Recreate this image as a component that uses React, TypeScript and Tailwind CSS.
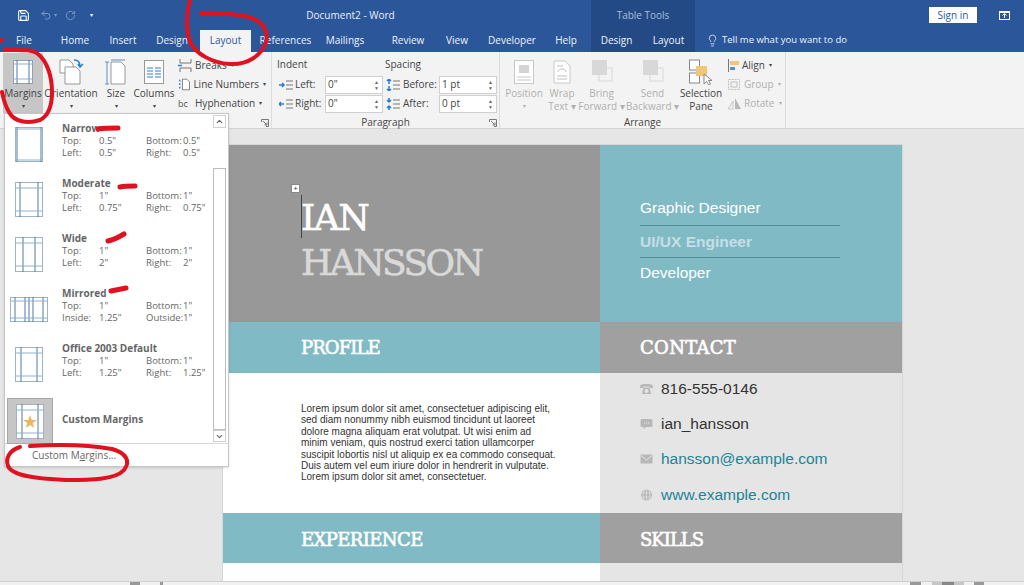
import { Lightbulb, Save, Undo2, RotateCw, ChevronUp, ChevronDown } from 'lucide-react';

const ui = 'font-["Open_Sans","Noto_Sans",sans-serif]';
const slab = 'font-["DejaVu_Serif",serif] [-webkit-text-stroke:0.6px_currentColor]';

const tabs = [
    { label: 'File', w: 'w-[48px]' },
    { label: 'Home', w: 'w-[54px]' },
    { label: 'Insert', w: 'w-[42px]' },
    { label: 'Design', w: 'w-[56px]' },
];
const tabsAfter = [
    { label: 'References', w: 'w-[69px]' },
    { label: 'Mailings', w: 'w-[50px]' },
    { label: 'Review', w: 'w-[76px]' },
    { label: 'View', w: 'w-[22px]' },
    { label: 'Developer', w: 'w-[88px]' },
    { label: 'Help', w: 'w-[20px]' },
];

const margins = [
    { name: 'Narrow', a: ['Top:', '0.5"', 'Bottom:', '0.5"'], b: ['Left:', '0.5"', 'Right:', '0.5"'], x: 2, y: 2 },
    { name: 'Moderate', a: ['Top:', '1"', 'Bottom:', '1"'], b: ['Left:', '0.75"', 'Right:', '0.75"'], x: 5, y: 6 },
    { name: 'Wide', a: ['Top:', '1"', 'Bottom:', '1"'], b: ['Left:', '2"', 'Right:', '2"'], x: 8, y: 6 },
    { name: 'Mirrored', a: ['Top:', '1"', 'Bottom:', '1"'], b: ['Inside:', '1.25"', 'Outside:', '1"'], x: 6, y: 6, wide: true },
    { name: 'Office 2003 Default', a: ['Top:', '1"', 'Bottom:', '1"'], b: ['Left:', '1.25"', 'Right:', '1.25"'], x: 6, y: 6 },
];

const Thumb = ({ x, y, wide }: { x: number; y: number; wide?: boolean }) =>
    wide ? (
        <svg width="38" height="25" viewBox="0 0 38 25" className="shrink-0">
            <rect x="0.5" y="0.5" width="37" height="24" fill="#fff" stroke="#9fb3c8" />
            <path d="M19 0V25M5 0V25M33 0V25M15 0V25M23 0V25" stroke="#4f7ba3" fill="none" />
            <path d="M0 4H38M0 21H38" stroke="#8fb0cc" fill="none" />
        </svg>
    ) : (
        <svg width="28" height="35" viewBox="0 0 28 35" className="shrink-0">
            <rect x="0.5" y="0.5" width="27" height="34" fill="#fff" stroke="#9fb3c8" />
            <path d={`M${x} 0V35M${28 - x} 0V35`} stroke="#4f7ba3" fill="none" />
            <path d={`M0 ${y}H28M0 ${35 - y}H28`} stroke="#8fb0cc" fill="none" />
        </svg>
    );

const BigButton = ({ w, label, label2, active, disabled, arrow, icon }: { w: string; label: string; label2?: string; active?: boolean; disabled?: boolean; arrow?: boolean; icon: React.ReactNode }) => (
    <div className={`${w} h-[60px] shrink-0 flex flex-col items-center pt-[3px] text-[10px] leading-[13px] ${active ? 'bg-[#c6c6c6]' : ''} ${disabled ? 'text-[#b0b0b0]' : 'text-[#444]'}`}>
        <div className="h-[31px] flex items-center justify-center">{icon}</div>
        <div className="whitespace-nowrap">{label}</div>
        {label2 && <div className="whitespace-nowrap">{label2}</div>}
        {arrow && <div className="text-[6px] leading-[13px]">▾</div>}
    </div>
);

const SmallRow = ({ icon, label, disabled }: { icon: React.ReactNode; label: string; disabled?: boolean }) => (
    <div className={`h-[19px] flex items-center gap-[3px] text-[10px] whitespace-nowrap ${disabled ? 'text-[#b0b0b0]' : 'text-[#444]'}`}>
        {icon}
        {label}
        <span className="text-[6px] ml-[1px]">▾</span>
    </div>
);

const SpinInput = ({ value, w }: { value: string; w: string }) => (
    <div className={`${w} h-[18px] bg-white border border-[#d0d0d0] flex items-center justify-between pl-[2px] pr-[3px] text-[10px] text-[#444]`}>
        {value}
        <span className="flex flex-col text-[5px] leading-[6px] text-[#666]">
            <span>▲</span>
            <span>▼</span>
        </span>
    </div>
);

const Lines = ({ arrow }: { arrow: string }) => (
    <svg width="14" height="12" viewBox="0 0 14 12" className="shrink-0">
        <path d="M7 2H14M7 6H14M7 10H14" stroke="#777" fill="none" />
        <path d={arrow} stroke="#2b7cd3" strokeWidth="1.5" fill="none" />
    </svg>
);

const Launcher = () => (
    <svg width="8" height="8" viewBox="0 0 8 8">
        <path d="M0.5 3V0.5H7.5V7.5H5M2 2L6 6M6 3.5V6H3.5" stroke="#777" fill="none" />
    </svg>
);

const Arrange = ({ color }: { color: string }) => (
    <svg width="32" height="26" viewBox="0 0 32 26">
        <rect x="13" y="9" width="13" height="13" fill="#f3f3f3" stroke={color} />
        <rect x="6" y="1" width="15" height="15" fill={color} />
    </svg>
);

const ContactIcon = ({ kind }: { kind: 'phone' | 'chat' | 'mail' | 'web' }) => (
    <svg width="13" height="12" viewBox="0 0 13 12" className="shrink-0">
        {kind === 'phone' && <path d="M0 4C0 1 3 1 6.500 1C10 1 13 1 13 4V5H9.500V3.500H3.500V5H0ZM3 6L4 4.500H9L10 6L11 11H2ZM6.500 6A2 2 0 1 0 6.500 10A2 2 0 1 0 6.500 6Z" fill="#b8b8b8" fillRule="evenodd" />}
        {kind === 'chat' && (
            <>
                <path d="M2 1H11Q12.500 1 12.500 2.500V7.500Q12.500 9 11 9H6L3.500 11V9H2Q0.500 9 0.500 7.500V2.500Q0.500 1 2 1Z" fill="#b8b8b8" />
                <path d="M4 5H5M6 5H7M8 5H9" stroke="#e5e5e5" />
            </>
        )}
        {kind === 'mail' && (
            <>
                <rect x="0.500" y="1.500" width="12" height="9" fill="#b8b8b8" />
                <path d="M1 2.500L6.500 7L12 2.500" stroke="#e5e5e5" fill="none" />
            </>
        )}
        {kind === 'web' && (
            <>
                <circle cx="6.500" cy="6" r="5.500" fill="#b8b8b8" />
                <path d="M1 4H12M1 8H12M6.500 0.500V11.500M4 1Q2 6 4 11M9 1Q11 6 9 11" stroke="#e5e5e5" strokeWidth="0.6" fill="none" />
            </>
        )}
    </svg>
);

const App = () => {
    return (
        <div className={`relative w-[1024px] h-[585px] overflow-hidden flex flex-col bg-[#e6e6e6] ${ui}`}>
            {/* title bar */}
            <div className="h-[30px] shrink-0 bg-[#2b579a] flex items-center text-white text-[10px]">
                <Save size={13} className="ml-[17px]" />
                <Undo2 size={12} className="ml-[10px] text-[#7d9ac7]" />
                <span className="ml-[2px] text-[6px] text-[#7d9ac7]">▾</span>
                <RotateCw size={11} className="ml-[8px] text-[#7d9ac7]" />
                <span className="ml-[14px] text-[6px]">▾</span>
                <div className="ml-[212px] w-[91px] text-center whitespace-nowrap text-[#e8eef7]">Document2 - Word</div>
                <div className="ml-[195px] w-[104px] h-full bg-[#234a85] flex items-center justify-center text-[#a9bedd]">Table Tools</div>
                <div className="ml-[234px] w-[48px] h-[16px] bg-white text-[#2b579a] flex items-center justify-center">Sign in</div>
                <svg width="11" height="9" viewBox="0 0 11 9" className="ml-[22px]">
                    <rect x="0.5" y="0.5" width="10" height="8" fill="none" stroke="#fff" />
                    <path d="M5.5 7V3M3.5 4.5L5.5 2.5L7.5 4.5M0 1.5H11" stroke="#fff" fill="none" />
                </svg>
            </div>
            {/* tabs */}
            <div className="h-[22px] shrink-0 bg-[#2b579a] flex items-stretch text-[10px] text-[#eef3fa] whitespace-nowrap">
                {tabs.map((t) => (
                    <div key={t.label} className={`${t.w} pb-[2px] flex items-center justify-center`}>{t.label}</div>
                ))}
                <div className="w-[51px] pb-[2px] bg-[#f3f3f3] text-[#2b579a] flex items-center justify-center">Layout</div>
                {tabsAfter.map((t) => (
                    <div key={t.label} className={`${t.w} pb-[2px] flex items-center justify-center`}>{t.label}</div>
                ))}
                <div className="ml-[15px] w-[51px] pb-[2px] bg-[#234a85] flex items-center justify-center">Design</div>
                <div className="w-[53px] pb-[2px] bg-[#234a85] flex items-center justify-center">Layout</div>
                <div className="ml-[11px] pb-[2px] flex items-center gap-[3px] text-[9.5px]">
                    <Lightbulb size={13} strokeWidth={1.4} />
                    Tell me what you want to do
                </div>
            </div>
            {/* ribbon */}
            <div className="h-[77px] shrink-0 bg-[#f3f3f3] border-b border-[#d4d4d4] flex items-stretch">
                <div className="w-[272px] shrink-0 border-r border-[#dcdcdc] flex pl-[3px] pt-px relative">
                    <BigButton w="w-[40px]" label="Margins" active arrow icon={
                        <svg width="20" height="24" viewBox="0 0 20 24">
                            <rect x="0.5" y="0.5" width="19" height="23" fill="#fff" stroke="#8ba1b8" />
                            <path d="M4 0V24M16 0V24" stroke="#4f7ba3" fill="none" />
                            <path d="M0 4H20M0 19H20" stroke="#8fb0cc" fill="none" />
                        </svg>
                    } />
                    <div className="w-[2px]" />
                    <BigButton w="w-[52px]" label="Orientation" arrow icon={
                        <svg width="27" height="26" viewBox="0 0 27 26">
                            <path d="M2 1H11L15 5V14H2Z" fill="#fff" stroke="#999" />
                            <path d="M7 8H18L22 12V25H7Z" fill="#fff" stroke="#999" />
                            <path d="M16 1C20 1 22 3 22 7M20 5L22 8L25 5" stroke="#2b7cd3" strokeWidth="1.5" fill="none" />
                        </svg>
                    } />
                    <div className="w-[5px]" />
                    <BigButton w="w-[28px]" label="Size" arrow icon={
                        <svg width="22" height="26" viewBox="0 0 22 26">
                            <path d="M6 3H16L20 7V25H6Z" fill="#fff" stroke="#999" />
                            <path d="M2 3V25M6 1H20M0 3H4M0 25H4" stroke="#5a8fc4" fill="none" />
                        </svg>
                    } />
                    <div className="w-[3px]" />
                    <BigButton w="w-[42px]" label="Columns" arrow icon={
                        <svg width="20" height="24" viewBox="0 0 20 24">
                            <rect x="0.5" y="0.5" width="19" height="23" fill="#fff" stroke="#999" />
                            <path d="M3 8H9M11 8H17M3 11H9M11 11H17M3 14H9M11 14H17M3 17H9M11 17H17" stroke="#2b7cd3" fill="none" />
                        </svg>
                    } />
                    <div className="ml-[3px] w-[88px] pt-[3px]">
                        <SmallRow label="Breaks" icon={
                            <svg width="14" height="13" viewBox="0 0 14 13">
                                <path d="M2 0V4H13V0M2 13V9H13V13" stroke="#777" fill="none" />
                                <path d="M0 6.5H4" stroke="#2b7cd3" strokeWidth="1.5" />
                            </svg>
                        } />
                        <SmallRow label="Line Numbers" icon={
                            <svg width="14" height="13" viewBox="0 0 14 13">
                                <path d="M5 0.5H10L13 3.5V12.5H5Z" fill="#fff" stroke="#777" />
                                <path d="M2 1V3M2 5V7M2 9V11" stroke="#2b7cd3" strokeWidth="1.5" />
                            </svg>
                        } />
                        <SmallRow label="Hyphenation" icon={<span className="w-[14px] text-[9px] leading-[9px] text-[#555]">bc</span>} />
                    </div>
                    <div className="absolute right-[2px] bottom-[1px]"><Launcher /></div>
                </div>
                <div className="w-[228px] shrink-0 border-r border-[#dcdcdc] flex flex-col relative text-[10px] text-[#444]">
                    <div className="flex pl-[5px]">
                        <div className="w-[108px]">
                            <div className="h-[23px] pt-[6px] leading-[13px]">Indent</div>
                            <div className="h-[19px] pl-[2px] flex items-center"><Lines arrow="M0 6H5M3 4L5 6L3 8" /><span className="ml-[2px] w-[30px]">Left:</span><SpinInput value={'0"'} w="w-[58px]" /></div>
                            <div className="h-[19px] pl-[2px] flex items-center"><Lines arrow="M0 6H5M2 4L0 6L2 8" /><span className="ml-[2px] w-[30px]">Right:</span><SpinInput value={'0"'} w="w-[58px]" /></div>
                        </div>
                        <div className="ml-[1px]">
                            <div className="h-[23px] pt-[6px] -ml-px leading-[13px]">Spacing</div>
                            <div className="h-[19px] flex items-center"><Lines arrow="M3 0V5M1 2L3 0L5 2M3 7V12M1 10L3 12L5 10" /><span className="ml-[3px] w-[36px]">Before:</span><SpinInput value="1 pt" w="w-[58px]" /></div>
                            <div className="h-[19px] flex items-center"><Lines arrow="M3 0V4M1 2L3 4L5 2M3 8V12M1 10L3 8L5 10" /><span className="ml-[3px] w-[36px]">After:</span><SpinInput value="0 pt" w="w-[58px]" /></div>
                        </div>
                    </div>
                    <div className="absolute bottom-0 left-0 right-0 text-center leading-[11px]">Paragraph</div>
                    <div className="absolute right-[2px] bottom-[1px]"><Launcher /></div>
                </div>
                <div className="w-[286px] shrink-0 border-r border-[#dcdcdc] flex pl-[4px] pt-px relative">
                    <BigButton w="w-[40px]" label="Position" disabled arrow icon={
                        <svg width="20" height="24" viewBox="0 0 20 24">
                            <rect x="0.5" y="0.5" width="19" height="23" fill="#fff" stroke="#c8c8c8" />
                            <rect x="5" y="5" width="10" height="8" fill="#d4d4d4" />
                            <path d="M3 17H17M3 20H17" stroke="#c8c8c8" />
                        </svg>
                    } />
                    <div className="ml-[6px]">
                        <BigButton w="w-[24px]" label="Wrap" label2="Text ▾" disabled icon={
                            <svg width="18" height="24" viewBox="0 0 18 24">
                                <path d="M1 1H12L17 6V23H1Z" fill="#fff" stroke="#c8c8c8" />
                                <path d="M4 6H10M4 19H14M4 16H14M5 12C5 8 13 8 13 12" stroke="#c0c0c0" fill="none" />
                            </svg>
                        } />
                    </div>
                    <div className="ml-[7px]">
                        <BigButton w="w-[41px]" label="Bring" label2="Forward ▾" disabled icon={<Arrange color="#d8d8d8" />} />
                    </div>
                    <div className="ml-[6px]">
                        <BigButton w="w-[49px]" label="Send" label2="Backward ▾" disabled icon={<Arrange color="#d8d8d8" />} />
                    </div>
                    <div className="ml-[3px]">
                        <BigButton w="w-[42px]" label="Selection" label2="Pane" icon={
                            <svg width="24" height="26" viewBox="0 0 24 26">
                                <rect x="0.5" y="1" width="10" height="10" fill="#fff" stroke="#888" />
                                <rect x="0.5" y="14" width="10" height="10" fill="#fff" stroke="#888" />
                                <rect x="7" y="7" width="11" height="10" fill="#f0c778" />
                                <path d="M15 15V25L17.5 22.5L20 26L21.5 25L19.5 21.5H23Z" fill="#fff" stroke="#888" />
                            </svg>
                        } />
                    </div>
                    <div className="ml-[5px] pt-[3px]">
                        <SmallRow label="Align" icon={
                            <svg width="12" height="13" viewBox="0 0 12 13">
                                <path d="M1.5 0V13" stroke="#777" />
                                <rect x="3" y="2" width="9" height="4" fill="#f0c778" />
                                <rect x="3" y="8" width="5" height="3" fill="#5a8fc4" />
                            </svg>
                        } />
                        <SmallRow label="Group" disabled icon={
                            <svg width="14" height="13" viewBox="0 0 14 13">
                                <rect x="1.5" y="1.5" width="11" height="10" fill="none" stroke="#c0c0c0" strokeDasharray="2 1" />
                                <path d="M4 4H10V9H4Z" fill="none" stroke="#c0c0c0" />
                            </svg>
                        } />
                        <SmallRow label="Rotate" disabled icon={
                            <svg width="14" height="13" viewBox="0 0 14 13">
                                <path d="M1 12L6 4V12Z" fill="none" stroke="#c8c8c8" />
                                <path d="M8 12V1L14 12Z" fill="#b8b8b8" />
                            </svg>
                        } />
                    </div>
                    <div className="absolute bottom-0 left-0 right-0 text-center text-[10px] leading-[11px] text-[#444]">Arrange</div>
                </div>
            </div>
            {/* document */}
            <div className="flex-1 min-h-0 pl-[222px] pt-[15px]">
                <div className="w-[681px] border border-[#d6d6d6] border-b-0 h-full bg-white flex flex-col font-['Liberation_Sans',sans-serif]">
                    <div className="h-[177px] shrink-0 flex">
                        <div className="w-[377px] bg-[#989898] pl-[78px] pt-[50px] relative">
                            <div className="absolute left-[68px] top-[39px] w-[9px] h-[9px] bg-white border border-[#888] text-[#444] flex items-center justify-center text-[8px] leading-none">+</div>
                            <div className="absolute left-[78px] top-[50px] w-px h-[43px] bg-[#444]" />
                            <div className={`text-[36px] leading-[45px] tracking-[-1.5px] text-white ${slab}`}>IAN</div>
                            <div className={`text-[36px] leading-[45px] tracking-[-2.6px] text-[#d9d9d9] ${slab}`}>HANSSON</div>
                        </div>
                        <div className="flex-1 bg-[#80bac5] pl-[40px] pt-[54px] text-[15.5px] text-white">
                            <div className="w-[200px] h-[27px] border-b border-[#4f8f9c] leading-[18px]">Graphic Designer</div>
                            <div className="w-[200px] h-[32px] border-b border-[#4f8f9c] pt-[7px] leading-[18px] font-bold text-[#c5dfe5]">UI/UX Engineer</div>
                            <div className="pt-[6px] leading-[18px]">Developer</div>
                        </div>
                    </div>
                    <div className="h-[51px] shrink-0 flex text-white">
                        <div className={`w-[377px] bg-[#80bac5] pl-[78px] flex items-center text-[18px] tracking-[-0.9px] ${slab}`}>PROFILE</div>
                        <div className={`flex-1 bg-[#a0a0a0] pl-[40px] flex items-center text-[18px] tracking-[0.3px] ${slab}`}>CONTACT</div>
                    </div>
                    <div className="h-[140px] shrink-0 flex">
                        <div className="w-[377px] bg-white pl-[78px] pt-[30px] text-[10px] leading-[11.4px] text-[#333] whitespace-nowrap">
                            <div>Lorem ipsum dolor sit amet, consectetuer adipiscing elit,</div>
                            <div>sed diam nonummy nibh euismod tincidunt ut laoreet</div>
                            <div>dolore magna aliquam erat volutpat. Ut wisi enim ad</div>
                            <div>minim veniam, quis nostrud exerci tation ullamcorper</div>
                            <div>suscipit lobortis nisl ut aliquip ex ea commodo consequat.</div>
                            <div>Duis autem vel eum iriure dolor in hendrerit in vulputate.</div>
                            <div>Lorem ipsum dolor sit amet, consectetuer.</div>
                        </div>
                        <div className="flex-1 bg-[#e5e5e5] pl-[40px] text-[15.5px]">
                            <div className="h-[35px] -mt-[2px] flex items-center gap-[8px] text-[#333]"><ContactIcon kind="phone" />816-555-0146</div>
                            <div className="h-[35px] flex items-center gap-[8px] text-[#333]"><ContactIcon kind="chat" />ian_hansson</div>
                            <div className="h-[36px] flex items-center gap-[8px] text-[#1d8496]"><ContactIcon kind="mail" />hansson@example.com</div>
                            <div className="h-[35px] flex items-center gap-[8px] text-[#1d8496]"><ContactIcon kind="web" />www.example.com</div>
                        </div>
                    </div>
                    <div className="h-[50px] shrink-0 flex text-white">
                        <div className={`w-[377px] bg-[#80bac5] pl-[78px] pt-[3px] flex items-center text-[18px] tracking-[-0.6px] ${slab}`}>EXPERIENCE</div>
                        <div className={`flex-1 bg-[#a0a0a0] pl-[40px] pt-[3px] flex items-center text-[18px] tracking-[-1px] ${slab}`}>SKILLS</div>
                    </div>
                    <div className="flex-1 flex">
                        <div className="w-[377px] bg-white" />
                        <div className="flex-1 bg-[#e5e5e5]" />
                    </div>
                </div>
            </div>
            {/* status bar */}
            <div className="h-[4px] shrink-0 bg-[#f1f1f1] border-t border-[#cfcfcf] flex items-stretch">
                <div className="ml-[130px] w-[10px] bg-[#999]" />
                <div className="ml-[20px] w-[3px] bg-[#999]" />
                <div className="ml-[747px] w-[11px] bg-[#999]" />
                <div className="ml-[11px] w-[32px] bg-[#c6c6c6] flex justify-center"><div className="w-[12px] bg-[#888]" /></div>
                <div className="ml-[10px] w-[10px] bg-[#999]" />
            </div>

            {/* margins dropdown */}
            <div className="absolute left-[4px] top-[113px] w-[225px] h-[354px] bg-white border border-[#c6c6c6] shadow-sm flex flex-col text-[#666] text-[10px]">
                <div className="flex-1 flex min-h-0">
                    <div className="flex-1">
                        {margins.map((m) => (
                            <div key={m.name} className="h-[55px] flex">
                                <div className="w-[57px] h-full shrink-0 flex items-center justify-center pt-[6px] pr-[9px]">
                                    <Thumb x={m.x} y={m.y} wide={m.wide} />
                                </div>
                                <div className="leading-[12.5px] pt-[8px]">
                                    <div className="font-bold">{m.name}</div>
                                    {[m.a, m.b].map((r) => (
                                        <div key={r[0]} className="flex text-[9.5px]">
                                            <span className="w-[37px]">{r[0]}</span>
                                            <span className="w-[47px]">{r[1]}</span>
                                            <span className="w-[37px]">{r[2]}</span>
                                            <span>{r[3]}</span>
                                        </div>
                                    ))}
                                </div>
                            </div>
                        ))}
                        <div className="h-[55px] flex items-end">
                            <div className="ml-[2px] w-[46px] h-[46px] bg-[#c6c6c6] border border-[#a8a8a8] flex items-center justify-center relative">
                                <Thumb x={6} y={6} />
                                <span className="absolute inset-0 flex items-center justify-center text-[18px] text-[#e8b860]">★</span>
                            </div>
                            <div className="ml-[9px] mb-[17px] font-bold whitespace-nowrap">Custom Margins</div>
                        </div>
                    </div>
                    <div className="w-[13px] mr-[2px] mt-[1px] mb-[1px] shrink-0 flex flex-col">
                        <div className="h-[13px] border border-[#d0d0d0] flex items-center justify-center"><ChevronUp size={9} strokeWidth={3} /></div>
                        <div className="h-[40px]" />
                        <div className="flex-1 border border-[#bdbdbd]" />
                        <div className="h-[12px] border border-[#d0d0d0] flex items-center justify-center"><ChevronDown size={9} strokeWidth={3} /></div>
                    </div>
                </div>
                <div className="h-[23px] shrink-0 border-t border-[#d8d8d8] pl-[27px] flex items-center">
                    <span>Custom M<span className="underline">a</span>rgins...</span>
                </div>
            </div>

            {/* red pen scribbles on top of the screenshot */}
            <svg width="1024" height="585" viewBox="0 0 1024 585" className="absolute inset-0 pointer-events-none" fill="none" stroke="#e0121f" strokeLinecap="round" strokeLinejoin="round" strokeWidth="4">
                <path d="M190 0C186 15 186 30 190 42C196 54 212 63 230 64C248 65 262 55 266 42C269 30 262 20 245 16C230 13 215 13 201 13" />
                <path d="M5 50C20 50 32 49 38 54C48 62 52 78 52 92C52 106 48 116 40 120C28 124 14 122 9 112C4 104 3 96 2 92" />
                <path d="M0 41L2 40" />
                <path d="M20 447C10 450 5 458 8 466C12 476 38 479 66 480C90 480 115 480 124 470C131 461 126 453 112 449C90 445 60 444 30 446" />
                <g strokeWidth="5">
                    <path d="M98 129C105 128 112 128 118 128" />
                    <path d="M120 187C125 186 130 186 135 186" />
                    <path d="M108 241C113 240 119 237 124 234" />
                    <path d="M111 291C116 290 121 289 126 288" />
                </g>
            </svg>
        </div>
    );
};

export default App;
